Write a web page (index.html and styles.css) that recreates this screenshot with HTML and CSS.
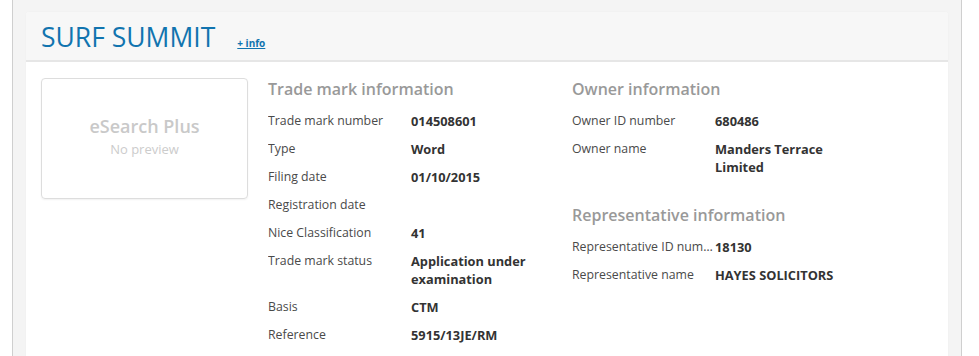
FILE: index.html
```html
<!DOCTYPE html>
<html lang="en">
<head>
    <meta charset="UTF-8">
    <title>SURF SUMMIT - eSearch Plus</title>
    <link rel="stylesheet" href="styles.css">
</head>
<body>
    <div class="page">
        <div class="card">
            <div class="card-header">
                <h1>SURF SUMMIT</h1>
                <a href="#" class="more">+ info</a>
            </div>
            <div class="card-body">
                <div class="preview">
                    <span class="preview-title">eSearch Plus</span>
                    <span class="preview-sub">No preview</span>
                </div>

                <div class="column">
                    <h2>Trade mark information</h2>
                    <div class="row"><span class="label">Trade mark number</span><span class="value">014508601</span></div>
                    <div class="row"><span class="label">Type</span><span class="value">Word</span></div>
                    <div class="row"><span class="label">Filing date</span><span class="value">01/10/2015</span></div>
                    <div class="row"><span class="label">Registration date</span><span class="value"></span></div>
                    <div class="row"><span class="label">Nice Classification</span><span class="value">41</span></div>
                    <div class="row"><span class="label">Trade mark status</span><span class="value">Application under examination</span></div>
                    <div class="row"><span class="label">Basis</span><span class="value">CTM</span></div>
                    <div class="row"><span class="label">Reference</span><span class="value">5915/13JE/RM</span></div>
                </div>

                <div class="column">
                    <h2>Owner information</h2>
                    <div class="row"><span class="label">Owner ID number</span><span class="value">680486</span></div>
                    <div class="row"><span class="label">Owner name</span><span class="value">Manders Terrace Limited</span></div>

                    <h2 class="next">Representative information</h2>
                    <div class="row"><span class="label" title="Representative ID number">Representative ID number</span><span class="value">18130</span></div>
                    <div class="row"><span class="label">Representative name</span><span class="value">HAYES SOLICITORS</span></div>
                </div>
            </div>
        </div>
    </div>
</body>
</html>
```

FILE: styles.css
```css
body {
    margin: 0;
    font-family: 'Open Sans', 'Liberation Sans', Arial, sans-serif;
    background-color: #ffffff;
    color: #333333;
    height: 356px;
    overflow: hidden;
}
.page {
    margin-left: 12px;
    width: 922px;
    padding: 12px 13px 0 13px;
    background-color: #f4f4f4;
    border-left: 1px solid #cfcfcf;
    border-right: 1px solid #cfcfcf;
    height: 400px;
}
.card {
    background-color: #ffffff;
    border-radius: 3px 3px 0 0;
    box-shadow: 0 0 1px rgba(0, 0, 0, 0.08);
    height: 100%;
}
.card-header {
    display: flex;
    align-items: baseline;
    height: 48px;
    padding: 0 15px;
    background-color: #f7f7f7;
    border-bottom: 2px solid #e6e6e6;
    border-radius: 3px 3px 0 0;
}
h1 {
    margin: 0;
    font-size: 26.5px;
    font-weight: 400;
    line-height: 50px;
    color: #1174af;
}
.more {
    margin-left: 22px;
    font-size: 10px;
    font-weight: 700;
    color: #1174af;
}
.card-body {
    display: flex;
    padding: 16px 15px;
}
.preview {
    width: 205px;
    height: 119px;
    border: 1px solid #dddddd;
    border-radius: 4px;
    box-shadow: 0 1px 2px rgba(0, 0, 0, 0.06);
    display: flex;
    flex-direction: column;
    align-items: center;
    justify-content: center;
    margin-right: 20px;
    flex-shrink: 0;
}
.preview-title {
    font-size: 18px;
    font-weight: 600;
    color: #c9c9c9;
    line-height: 24px;
    margin-top: -2px;
}
.preview-sub {
    font-size: 13px;
    color: #cccccc;
    line-height: 23px;
}
.column {
    width: 304px;
}
h2 {
    margin: 0 0 7px 0;
    font-size: 16px;
    font-weight: 600;
    line-height: 22px;
    color: #999999;
}
h2.next {
    margin-top: 23px;
}
.row {
    display: flex;
    padding: 5px 0;
    font-size: 12.3px;
    line-height: 18px;
}
.label {
    width: 141px;
    margin-right: 2px;
    flex-shrink: 0;
    color: #4a4a4a;
    white-space: nowrap;
    overflow: hidden;
    text-overflow: ellipsis;
}
.value {
    width: 150px;
    font-size: 12.8px;
    font-weight: 700;
    color: #333333;
}
```
